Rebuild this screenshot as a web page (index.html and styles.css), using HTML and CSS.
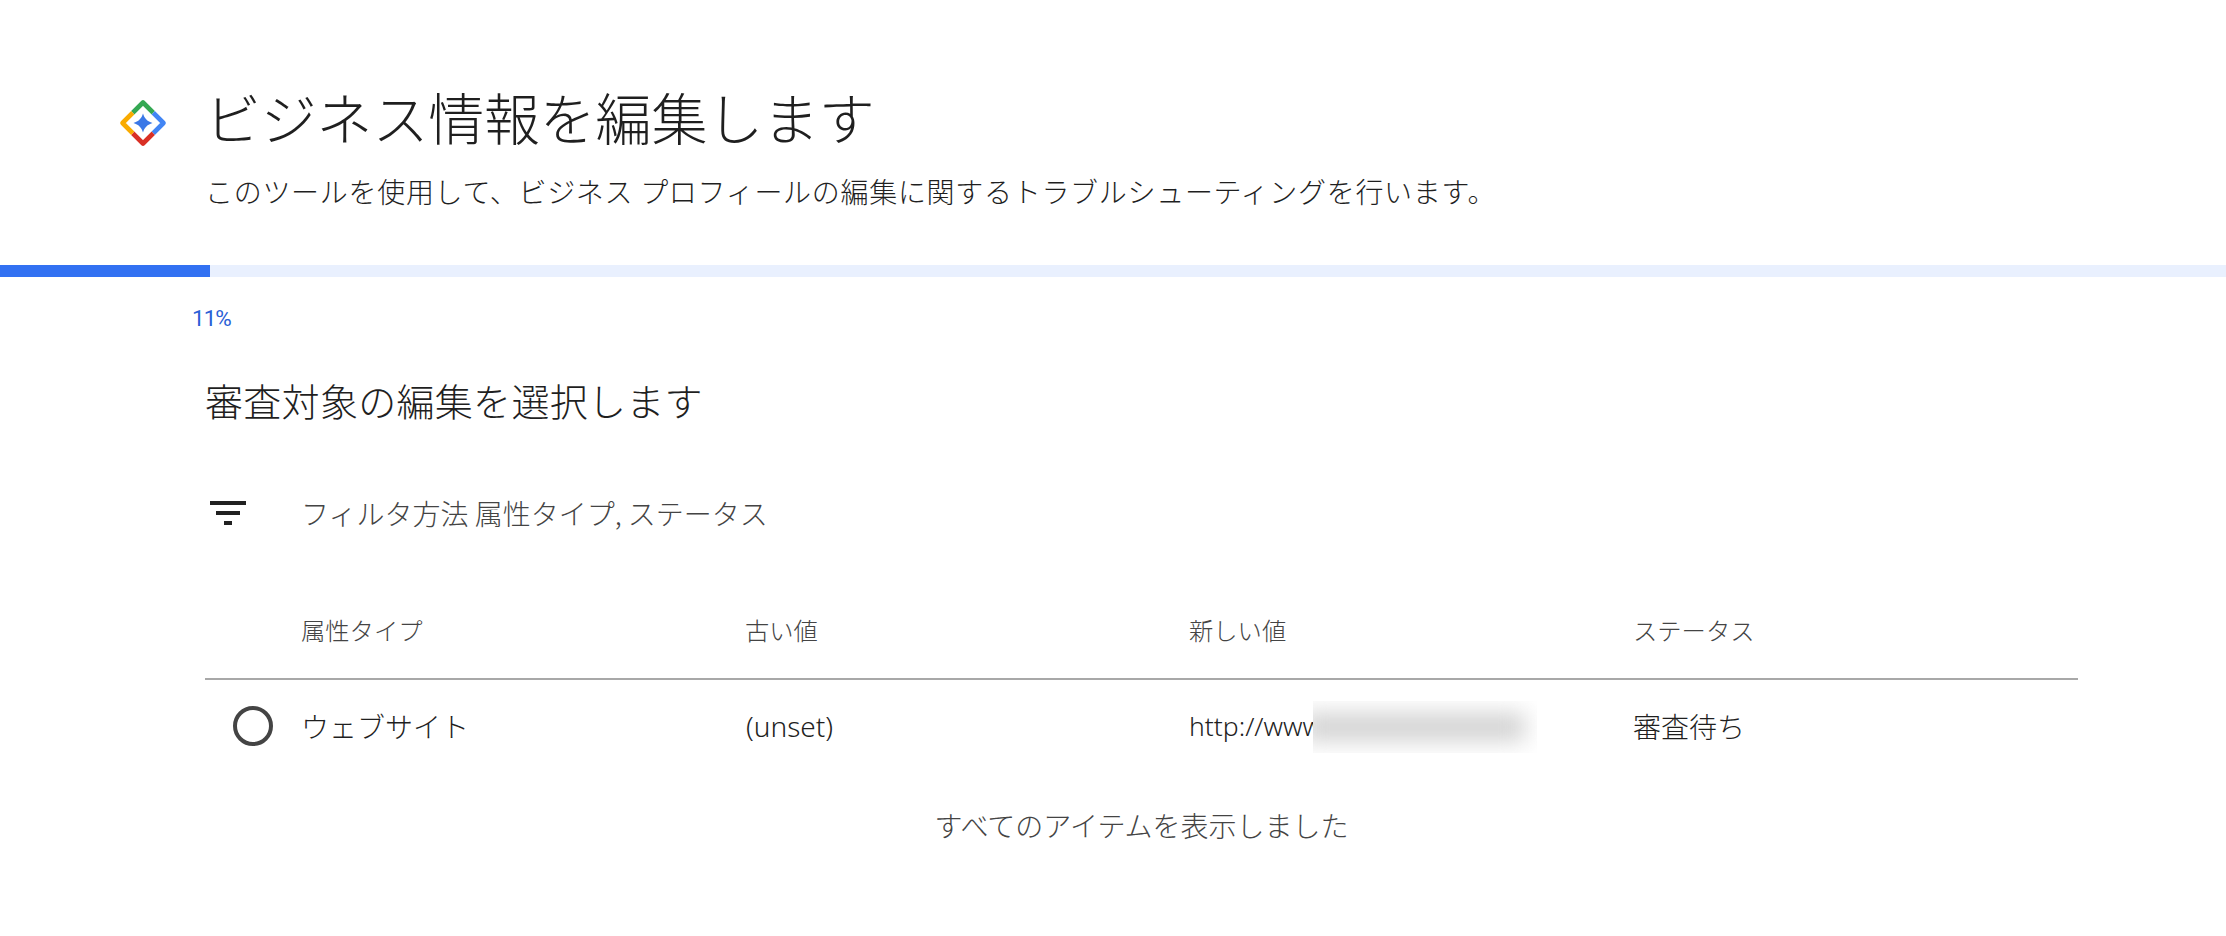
FILE: index.html
```html
<!DOCTYPE html>
<html lang="ja">
<head>
<meta charset="utf-8">
<title>ビジネス情報を編集します</title>
<link rel="stylesheet" href="styles.css">
</head>
<body>
<header class="head">
  <svg class="logo" viewBox="0 0 48 48" width="48" height="48" aria-hidden="true">
    <g fill="none" stroke-width="4.6" stroke-linejoin="round">
      <path d="M13.750 13.750 L24 3.5 L34.250 13.750" stroke="#34a853"/>
      <path d="M34.250 13.750 L44.5 24 L34.250 34.250" stroke="#4285f4"/>
      <path d="M34.250 34.250 L24 44.5 L13.750 34.250" stroke="#d93025"/>
      <path d="M13.750 34.250 L3.5 24 L13.750 13.750" stroke="#f9ab00"/>
    </g>
    <path d="M24 14.500 C25.500 19.500 28.500 22.500 33.500 24 C28.500 25.500 25.500 28.500 24 33.500 C22.500 28.500 19.500 25.500 14.500 24 C19.500 22.500 22.500 19.500 24 14.500Z" fill="#3b78e7"/>
  </svg>
  <div class="head-text">
    <h1 class="title">ビジネス情報を編集します</h1>
    <p class="sub">このツールを使用して、ビジネス プロフィールの編集に関するトラブルシューティングを行います。</p>
  </div>
</header>
<div class="track"><div class="fill"></div></div>
<div class="pct">11%</div>
<main class="content">
  <h2 class="section">審査対象の編集を選択します</h2>
  <div class="filter">
    <svg class="filter-icon" viewBox="0 0 36 24" width="36" height="24" aria-hidden="true">
      <rect x="0" y="0" width="36" height="4" fill="#212121"/>
      <rect x="6" y="10" width="24" height="4" fill="#212121"/>
      <rect x="14" y="20" width="8" height="4" fill="#212121"/>
    </svg>
    <span class="filter-text">フィルタ方法 属性タイプ, ステータス</span>
  </div>
  <div class="row row-head">
    <span></span><span>属性タイプ</span><span>古い値</span><span>新しい値</span><span>ステータス</span>
  </div>
  <div class="row row-body">
    <span class="radio-cell"><span class="radio"></span></span>
    <span>ウェブサイト</span>
    <span class="latin">(unset)</span>
    <span class="url">http://www<span class="blur"><span class="blur-inner"></span></span></span>
    <span>審査待ち</span>
  </div>
  <p class="end">すべてのアイテムを表示しました</p>
</main>
</body>
</html>
```
FILE: styles.css
```css
* { box-sizing: border-box; }
html, body { margin: 0; padding: 0; background: #fff; }
body {
  width: 2226px;
  height: 936px;
  overflow: hidden;
  font-family: "Noto Sans CJK JP", "Noto Sans", Roboto, sans-serif;
  color: #212121;
}
h1, h2, p { margin: 0; font-weight: 400; }
.head {
  display: flex;
  align-items: flex-start;
  padding: 78px 0 0 119px;
  height: 264px;
  gap: 38px;
}
.logo { margin-top: 21px; flex: none; }
.title { font-size: 56px; line-height: 76px; font-weight: 300; letter-spacing: -0.2px; color: #1f1f1f; }
.sub { font-size: 28px; line-height: 40px; margin-top: 17px; font-weight: 300; color: #1f1f1f; letter-spacing: 0.7px; }
.track { height: 12px; margin-top: 1px; background: #e9f0fe; }
.fill { width: 210px; height: 100%; background: #3271f2; }
.pct {
  font-family: Roboto, sans-serif;
  font-size: 22.5px;
  line-height: 30px;
  font-weight: 400;
  color: #2a60d6;
  padding: 26px 0 0 192px;
  letter-spacing: -1px;
}
.content { padding: 0 148px 0 205px; }
.section { font-size: 38px; line-height: 52px; margin-top: 41px; font-weight: 300; letter-spacing: 0.3px; color: #1f1f1f; }
.filter {
  display: flex;
  align-items: center;
  height: 40px;
  margin-top: 67px;
  padding-left: 5px;
  gap: 55px;
}
.filter-text { font-size: 28px; color: #444; font-weight: 300; }
.row {
  display: grid;
  grid-template-columns: 96px 444px 444px 444px 1fr;
  align-items: center;
}
.row-head {
  margin-top: 47px;
  height: 100px;
  font-size: 24.3px;
  font-weight: 300;
  color: #444;
  border-bottom: 2px solid #a8a8a8;
}
.row-body { height: 92px; font-size: 28px; font-weight: 300; color: #1f1f1f; }
.latin { font-family: "Noto Sans", sans-serif; font-weight: 300; font-size: 28px; padding-left: 1px; }
.radio-cell { display: flex; padding-left: 28px; }
.radio { width: 40px; height: 40px; border: 4px solid #444; border-radius: 50%; }
.url { position: relative; font-family: "Noto Sans", sans-serif; font-weight: 300; font-size: 26.5px; }
.blur {
  position: absolute;
  left: 124px;
  top: -7px;
  width: 224px;
  height: 52px;
  background: #fff;
  overflow: hidden;
}
.blur-inner {
  display: block;
  margin: 12px 0 0 -10px;
  width: 222px;
  height: 28px;
  background: #d2d2d2;
  filter: blur(11px);
}
.end { font-size: 28px; font-weight: 300; color: #444; text-align: center; margin-top: 31px; line-height: 44px; }
```
